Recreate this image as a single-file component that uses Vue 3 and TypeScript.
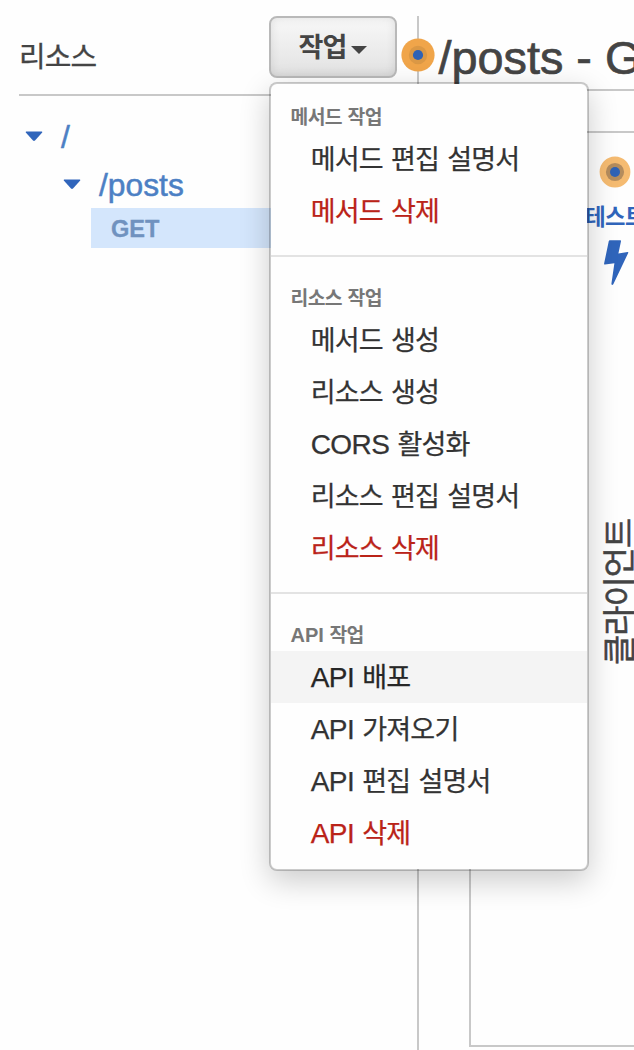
<script setup lang="ts">
import { h, type FunctionalComponent } from 'vue'

interface MenuItem {
  label: string
  danger?: boolean
  active?: boolean
}

interface MenuSection {
  title: string
  items: MenuItem[]
}

// Splits a label into Hangul, Latin and space runs so each gets its own metrics.
const Label: FunctionalComponent<{ text: string }> = (props) =>
  h(
    'span',
    { class: 'label' },
    (props.text.match(/[\uac00-\ud7a3]+|\s+|[^\s\uac00-\ud7a3]+/g) ?? []).map((run) =>
      h('span', { class: /[\uac00-\ud7a3]/.test(run) ? 'ko' : run.trim() ? 'en' : 'gap' }, run),
    ),
  )
Label.props = ['text']

const sections: MenuSection[] = [
  {
    title: '메서드 작업',
    items: [{ label: '메서드 편집 설명서' }, { label: '메서드 삭제', danger: true }],
  },
  {
    title: '리소스 작업',
    items: [
      { label: '메서드 생성' },
      { label: '리소스 생성' },
      { label: 'CORS 활성화' },
      { label: '리소스 편집 설명서' },
      { label: '리소스 삭제', danger: true },
    ],
  },
  {
    title: 'API 작업',
    items: [
      { label: 'API 배포', active: true },
      { label: 'API 가져오기' },
      { label: 'API 편집 설명서' },
      { label: 'API 삭제', danger: true },
    ],
  },
]
</script>

<template>
  <div class="page">
    <aside class="sidebar">
      <header class="side-head">
        <h2 class="side-title"><Label text="리소스" /></h2>
        <div class="dropdown">
          <button class="action-btn" type="button">
            <Label text="작업" />
            <svg class="btn-caret" width="16" height="8" viewBox="0 0 16 8"><path d="M0 0H16L8 8Z" /></svg>
          </button>
          <nav class="menu">
            <section v-for="section in sections" :key="section.title" class="section">
              <h3 class="section-title"><Label :text="section.title" /></h3>
              <a
                v-for="item in section.items"
                :key="item.label"
                class="item"
                :class="{ danger: item.danger, active: item.active }"
              ><Label :text="item.label" /></a>
            </section>
          </nav>
        </div>
      </header>
      <div class="tree">
        <div class="node root">
          <svg class="caret" width="18" height="11" viewBox="0 0 18 11"><path d="M1.2.5H16.8Q17.8.7 17 1.7L10 9.6Q9 10.4 8 9.6L1 1.7Q.2.7 1.2.5Z" /></svg>
          <span class="path">/</span>
        </div>
        <div class="node child">
          <svg class="caret" width="18" height="11" viewBox="0 0 18 11"><path d="M1.2.5H16.8Q17.8.7 17 1.7L10 9.6Q9 10.4 8 9.6L1 1.7Q.2.7 1.2.5Z" /></svg>
          <span class="path">/posts</span>
        </div>
        <div class="method">GET</div>
      </div>
    </aside>

    <main class="content">
      <svg class="hotspot" width="34" height="34" viewBox="0 0 34 34">
        <circle cx="17" cy="17" r="16.6" fill="#f0a54a" />
        <circle cx="17" cy="17" r="9.2" fill="#db9845" />
        <circle cx="17" cy="17" r="5.1" fill="#2f62b5" />
      </svg>
      <h1 class="title">/posts - GET</h1>
      <div class="band"></div>
      <div class="test">
        <svg width="32" height="32" viewBox="0 0 32 32">
          <circle cx="16" cy="16" r="15.4" fill="#f5bb71" />
          <circle cx="16" cy="16" r="9.1" fill="#b48c5d" />
          <circle cx="16" cy="16" r="5" fill="#2f62b5" />
        </svg>
        <span class="test-label"><Label text="테스트" /></span>
        <svg class="bolt" width="26" height="46" viewBox="0 0 26 46">
          <path d="M6.8.3H17.3Q18.2.3 18 1.2L15.4 13.6L24.6 12Q25.7 11.9 25.2 13L10.3 44.2Q8.8 46 8.4 43.8L11.4 23.3L2 24.6Q.9 24.6 1.1 23.6L5.8 1Q6 .3 6.8.3Z" />
        </svg>
      </div>
      <div class="client"><Label text="클라이언트" /></div>
      <div class="frame"></div>
    </main>
  </div>
</template>

<style>
body {
  margin: 0;
  background: #fefefe;
}

.label {
  white-space: pre;
}

.ko {
  font-family: 'Noto Sans CJK KR', sans-serif;
  font-size: 0.965em;
  letter-spacing: -0.029em;
}

.item .en {
  letter-spacing: -0.02em;
}

.item .gap {
  letter-spacing: 0.01em;
}
</style>

<style scoped>
.page {
  display: grid;
  grid-template-columns: 419px 215px;
  width: 634px;
  height: 1050px;
  overflow: hidden;
  background: #fefefe;
  color: #444;
  font-family: 'Liberation Sans', 'Noto Sans CJK KR', sans-serif;
}

h1,
h2,
h3 {
  margin: 0;
  font-weight: 400;
}

.sidebar {
  margin-top: 16px;
  padding-left: 19px;
  border-right: 2px solid #c8c8c8;
}

.side-head {
  display: flex;
  justify-content: space-between;
  height: 78px;
  border-bottom: 2px solid #c8c8c8;
}

.side-title {
  font-size: 30px;
  line-height: 77px;
  -webkit-text-stroke: 0.3px;
}

.dropdown {
  position: relative;
  width: 148px;
}

.action-btn {
  display: flex;
  align-items: center;
  justify-content: center;
  gap: 4px;
  box-sizing: border-box;
  width: 128px;
  height: 62px;
  padding: 0 1px 0 0;
  border: 2px solid #b9b9b9;
  border-radius: 8px;
  background: linear-gradient(#f8f8f8, #e2e2e2);
  box-shadow: inset 0 0 10px rgba(0, 0, 0, 0.1);
  color: #444;
  font: 700 28px/56px 'Liberation Sans', 'Noto Sans CJK KR', sans-serif;
}

.btn-caret {
  margin-top: 5px;
  fill: #444;
}

.menu {
  position: absolute;
  z-index: 5;
  top: 66px;
  left: 0;
  box-sizing: border-box;
  width: 320px;
  height: 789px;
  border: 2px solid rgba(0, 0, 0, 0.2);
  border-radius: 8px;
  background: #fefefe;
  background-clip: padding-box;
  box-shadow: 0 10px 30px rgba(0, 0, 0, 0.2);
}

.section {
  padding-bottom: 18px;
}

.section + .section {
  padding-top: 8px;
  border-top: 2px solid #e3e3e3;
}

.section-title {
  height: 49px;
  padding-left: 19.5px;
  color: #777;
  font-size: 20px;
  font-weight: 700;
  line-height: 64px;
}

.item {
  display: block;
  height: 52px;
  padding-left: 39.7px;
  color: #333;
  font-size: 28px;
  line-height: 49px;
  -webkit-text-stroke: 0.25px;
}

.danger {
  color: #ba2318;
}

.active {
  background: #f4f4f4;
  color: #262626;
}

.tree {
  color: #4c80c4;
  font-size: 31.8px;
}

.path {
  padding-top: 3px;
  -webkit-text-stroke: 0.5px;
}

.node {
  display: flex;
  align-items: center;
  gap: 18px;
}

.root {
  height: 64px;
  margin-top: 8px;
  padding-left: 6px;
}

.child {
  height: 32px;
  padding-left: 44px;
}

.caret {
  fill: #3065bb;
}

.method {
  height: 40px;
  margin-top: 8px;
  margin-left: 72px;
  padding-left: 20px;
  background: #d4e6fc;
  color: #7092bf;
  font-size: 23.6px;
  font-weight: 700;
  line-height: 42px;
  -webkit-text-stroke: 0.3px;
}

.content {
  position: relative;
  display: flex;
  flex-direction: column;
  min-width: 0;
}

.hotspot {
  position: absolute;
  top: 38px;
  left: -18px;
}

.title {
  height: 73px;
  padding: 16px 0 0 19.5px;
  border-bottom: 2px solid #c8c8c8;
  font-size: 46.8px;
  line-height: 84px;
  white-space: nowrap;
  -webkit-text-stroke: 0.7px;
}

.band {
  height: 40px;
  border-bottom: 2px solid #c8c8c8;
}

.test {
  display: flex;
  flex-direction: column;
  align-items: center;
  width: 62px;
  margin: 23px 0 0 165px;
  color: #3065bb;
}

.test-label {
  height: 52px;
  font-size: 23px;
  font-weight: 700;
  line-height: 54px;
}

.bolt {
  margin-left: 2px;
  fill: #3065bb;
}

.client {
  align-self: flex-end;
  width: 34px;
  height: 148px;
  margin-top: 231px;
  font-size: 34px;
  line-height: 34px;
  writing-mode: vertical-rl;
  text-orientation: sideways;
  transform: rotate(180deg);
  -webkit-text-stroke: 0.5px;
}

.frame {
  flex: 1;
  margin: 0 0 3px 50px;
  border-bottom: 2px solid #c8c8c8;
  border-left: 2px solid #c8c8c8;
}
</style>
